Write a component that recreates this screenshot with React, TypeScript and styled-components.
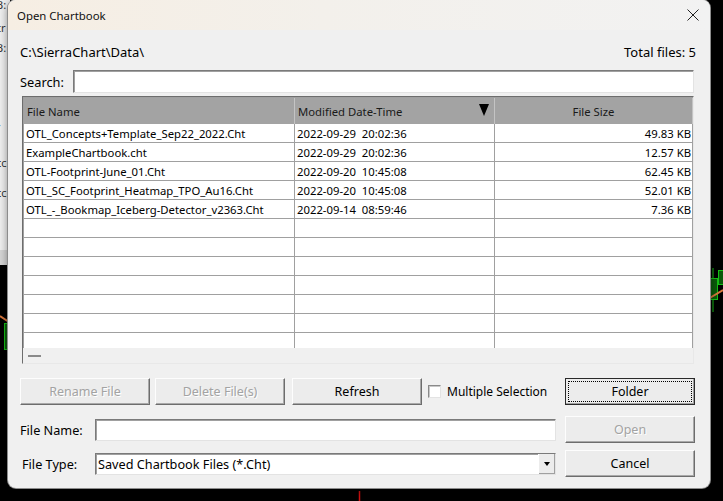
import React from "react";
import styled, { createGlobalStyle } from "styled-components";

interface FileEntry {
  name: string;
  modified: string;
  size: string;
}

const files: FileEntry[] = [
  { name: "OTL_Concepts+Template_Sep22_2022.Cht", modified: "2022-09-29  20:02:36", size: "49.83 KB" },
  { name: "ExampleChartbook.cht", modified: "2022-09-29  20:02:36", size: "12.57 KB" },
  { name: "OTL-Footprint-June_01.Cht", modified: "2022-09-20  10:45:08", size: "62.45 KB" },
  { name: "OTL_SC_Footprint_Heatmap_TPO_Au16.Cht", modified: "2022-09-20  10:45:08", size: "52.01 KB" },
  { name: "OTL_-_Bookmap_Iceberg-Detector_v2363.Cht", modified: "2022-09-14  08:59:46", size: "7.36 KB" },
];

const EMPTY_ROWS = 7;

// Styled components

const GlobalStyles = createGlobalStyle`
  html, body {
    margin: 0;
    padding: 0;
    background: #000;
  }
  body {
    font-family: "Noto Sans", "Open Sans", sans-serif;
    font-size: 12.7px;
    color: #000;
  }
`;

const Screen = styled.div`
  position: relative;
  width: 723px;
  height: 501px;
  overflow: hidden;
  background: #000;
  padding-left: 8px;
  box-sizing: border-box;
`;

const Backdrop = styled.svg`
  position: absolute;
  left: 0;
  top: 0;
`;

const Dialog = styled.div`
  position: relative;
  width: 702px;
  height: 488px;
  background: #f0f0f0;
  border-radius: 8px;
  box-shadow: 0 0 0 1px #8c8c8c, 0 2px 10px rgba(0, 0, 0, 0.5);
  display: flex;
  flex-direction: column;
  overflow: hidden;
`;

const TitleBar = styled.div`
  height: 30px;
  flex-shrink: 0;
  display: flex;
  align-items: center;
  justify-content: space-between;
  padding: 0 11px 0 9px;
  background: linear-gradient(90deg, #f6eee3 0%, #f3f0eb 45%, #f2f2f2 100%);
`;

const Title = styled.span`
  font-size: 11.4px;
  color: #111;
`;

const Content = styled.div`
  display: flex;
  flex-direction: column;
  padding: 0 16px 0 12px;
`;

const PathRow = styled.div`
  margin-top: 12px;
  height: 20px;
  display: flex;
  align-items: center;
  justify-content: space-between;
  margin-right: -2px;
  font-size: 13px;
`;

const SearchRow = styled.div`
  margin-top: 8px;
  display: flex;
  align-items: center;
  height: 23px;
  font-size: 12.8px;
`;

const SearchLabel = styled.span`
  width: 53px;
  flex-shrink: 0;
`;

const TextBox = styled.div<{ $height: number }>`
  flex: 1;
  height: ${(p) => p.$height}px;
  box-sizing: border-box;
  background: #fff;
  border: 1px solid;
  border-color: #7a7a7a #e3e3e3 #e3e3e3 #7a7a7a;
  box-shadow: inset 1px 1px 0 #a0a0a0;
  display: flex;
  align-items: center;
  padding-left: 2px;
  position: relative;
`;

const TableFrame = styled.div`
  margin: 3px 0 0 2px;
  width: 672px;
  height: 268px;
  box-sizing: border-box;
  border: 1px solid;
  border-color: #6d6d6d #e8e8e8 #e8e8e8 #6d6d6d;
  box-shadow: inset 1px 1px 0 #a0a0a0;
  background: #fff;
  display: flex;
  flex-direction: column;
  overflow: hidden;
  font-size: 11.3px;
`;

const Grid = styled.div`
  flex: 1;
  overflow: hidden;
  margin: 1px 0 0 1px;
  display: grid;
  grid-template-columns: 271px 200px 1fr;
  grid-template-rows: 26px;
  grid-auto-rows: 19px;
  align-content: start;
`;

const HeaderCell = styled.div<{ $align?: "left" | "center" }>`
  height: 26px;
  background: #a3a3a3;
  color: #1a1a1a;
  display: flex;
  align-items: center;
  justify-content: ${(p) => (p.$align === "center" ? "center" : "flex-start")};
  padding-left: ${(p) => (p.$align === "center" ? 0 : 3)}px;
  border-right: 1px solid #c4c4c4;
  position: relative;
  box-sizing: border-box;
`;

const SortArrow = styled.span`
  position: absolute;
  right: 5px;
  top: 6px;
  width: 0;
  height: 0;
  border-left: 5px solid transparent;
  border-right: 5px solid transparent;
  border-top: 12px solid #000;
`;

const Cell = styled.div<{ $align?: "left" | "right" }>`
  height: 19px;
  box-sizing: border-box;
  border-right: 1px solid #a0a0a0;
  border-bottom: 1px solid #a0a0a0;
  display: flex;
  align-items: center;
  justify-content: ${(p) => (p.$align === "right" ? "flex-end" : "flex-start")};
  padding: 0 1px 0 2px;
  white-space: pre;
  overflow: hidden;
`;

const ScrollStrip = styled.div`
  height: 15px;
  flex-shrink: 0;
  background: #f0f0f0;
  display: flex;
  align-items: center;
  padding-left: 5px;
`;

const Dash = styled.span`
  width: 13px;
  height: 2px;
  background: #8a8a8a;
`;

const ButtonRow = styled.div`
  margin-top: 14px;
  display: flex;
  align-items: center;
  height: 27px;
`;

const Button = styled.button<{ $focused?: boolean; $gap?: number }>`
  width: 130px;
  height: 27px;
  flex-shrink: 0;
  margin-left: ${(p) => p.$gap ?? 0}px;
  font-family: "Noto Sans", "Open Sans", sans-serif;
  font-size: 12.5px;
  color: #000;
  background: #ececec;
  border: 1px solid;
  border-color: ${(p) => (p.$focused ? "#2a2a2a" : "#fdfdfd #6d6d6d #6d6d6d #fdfdfd")};
  box-shadow: ${(p) => (p.$focused ? "inset -1px -1px 0 #a0a0a0" : "inset -1px -1px 0 #a9a9a9")};
  outline: ${(p) => (p.$focused ? "1px dotted #000" : "none")};
  outline-offset: -4px;
  padding: 0;
  cursor: default;

  &:disabled {
    color: #a3a3a3;
    text-shadow: 1px 1px 0 #fff;
  }
`;

const CheckLabel = styled.label`
  display: flex;
  align-items: center;
  gap: 6px;
  margin-left: 6px;
  font-size: 12px;
`;

const CheckBox = styled.span`
  width: 13px;
  height: 13px;
  box-sizing: border-box;
  background: #fff;
  border: 1px solid;
  border-color: #8a8a8a #e3e3e3 #e3e3e3 #8a8a8a;
  box-shadow: inset 1px 1px 0 #c8c8c8;
`;

const FolderSlot = styled.div`
  margin-left: auto;
  margin-right: -1px;
`;

const FormGrid = styled.div`
  margin-top: 11px;
  display: grid;
  grid-template-columns: 66px 461px 130px;
  column-gap: 9px;
  row-gap: 7px;
  grid-auto-rows: 27px;
  align-items: center;
`;

const FieldLabel = styled.span<{ $indent?: number }>`
  padding-left: ${(p) => p.$indent ?? 0}px;
  white-space: nowrap;
`;

const DropButton = styled.span`
  position: absolute;
  right: 0;
  top: 0;
  bottom: 0;
  width: 17px;
  box-sizing: border-box;
  background: #ececec;
  border-left: 1px solid #fff;
  box-shadow: inset -1px -1px 0 #a0a0a0;
  display: flex;
  align-items: center;
  justify-content: center;

  &::after {
    content: "";
    border-left: 3px solid transparent;
    border-right: 3px solid transparent;
    border-top: 4px solid #000;
  }
`;

const CloseIcon = () => (
  <svg width="12" height="12" viewBox="0 0 12 12">
    <path d="M0.5 0.5 L11.5 11.5 M11.5 0.5 L0.5 11.5" stroke="#222" strokeWidth="1" fill="none" />
  </svg>
);

// the chart window peeking out behind the dialog
const ChartBackdrop = () => (
  <Backdrop width={723} height={501}>
    <rect x={0} y={0} width={10} height={250} fill="#f0f0f0" />
    <rect x={0} y={250} width={10} height={15} fill="#d6d6d6" />
    <g fontFamily="Noto Sans, sans-serif" fontSize="11" fill="#333">
      <text x={-4} y={9}>B:</text>
      <text x={-3} y={32}>tr</text>
      <text x={-4} y={52}>B:</text>
      <text x={-2} y={129}>·</text>
      <text x={-4} y={167}>cc</text>
      <text x={-4} y={197}>cc</text>
    </g>
    <path d="M0 316 L9 322" stroke="#d9773d" strokeWidth="2" />
    <rect x={4.5} y={323.5} width={6} height={26} fill="#0a5a0a" stroke="#16c016" />
    <line x1={713} y1={268} x2={713} y2={312} stroke="#16c016" />
    <rect x={709.5} y={278.5} width={8} height={21} fill="#0a5a0a" stroke="#16c016" />
    <rect x={718.5} y={270.5} width={6} height={14} fill="#0a5a0a" stroke="#16c016" />
    <path d="M708 299 L723 290" stroke="#d9773d" strokeWidth="2" />
    <line x1={359.5} y1={491} x2={359.5} y2={501} stroke="#d01010" strokeWidth="1.5" />
  </Backdrop>
);

const App: React.FC = () => {
  return (
    <>
      <GlobalStyles />
      <Screen>
        <ChartBackdrop />
        <Dialog>
          <TitleBar>
            <Title>Open Chartbook</Title>
            <CloseIcon />
          </TitleBar>
          <Content>
            <PathRow>
              <span>C:\SierraChart\Data\</span>
              <span>Total files: 5</span>
            </PathRow>
            <SearchRow>
              <SearchLabel>Search:</SearchLabel>
              <TextBox $height={23} />
            </SearchRow>
            <TableFrame>
              <Grid>
                <HeaderCell>File Name</HeaderCell>
                <HeaderCell>
                  Modified Date-Time
                  <SortArrow />
                </HeaderCell>
                <HeaderCell $align="center">File Size</HeaderCell>
                {files.map((f) => (
                  <React.Fragment key={f.name}>
                    <Cell>{f.name}</Cell>
                    <Cell>{f.modified}</Cell>
                    <Cell $align="right">{f.size}</Cell>
                  </React.Fragment>
                ))}
                {Array.from({ length: EMPTY_ROWS }).map((_, i) => (
                  <React.Fragment key={i}>
                    <Cell />
                    <Cell />
                    <Cell />
                  </React.Fragment>
                ))}
              </Grid>
              <ScrollStrip>
                <Dash />
              </ScrollStrip>
            </TableFrame>
            <ButtonRow>
              <Button disabled>Rename File</Button>
              <Button disabled $gap={5}>Delete File(s)</Button>
              <Button $gap={7}>Refresh</Button>
              <CheckLabel>
                <CheckBox />
                Multiple Selection
              </CheckLabel>
              <FolderSlot>
                <Button $focused>Folder</Button>
              </FolderSlot>
            </ButtonRow>
            <FormGrid>
              <FieldLabel>File Name:</FieldLabel>
              <TextBox $height={22} />
              <Button disabled>Open</Button>
              <FieldLabel $indent={2}>File Type:</FieldLabel>
              <TextBox $height={22}>
                Saved Chartbook Files (*.Cht)
                <DropButton />
              </TextBox>
              <Button>Cancel</Button>
            </FormGrid>
          </Content>
        </Dialog>
      </Screen>
    </>
  );
};

export default App;
